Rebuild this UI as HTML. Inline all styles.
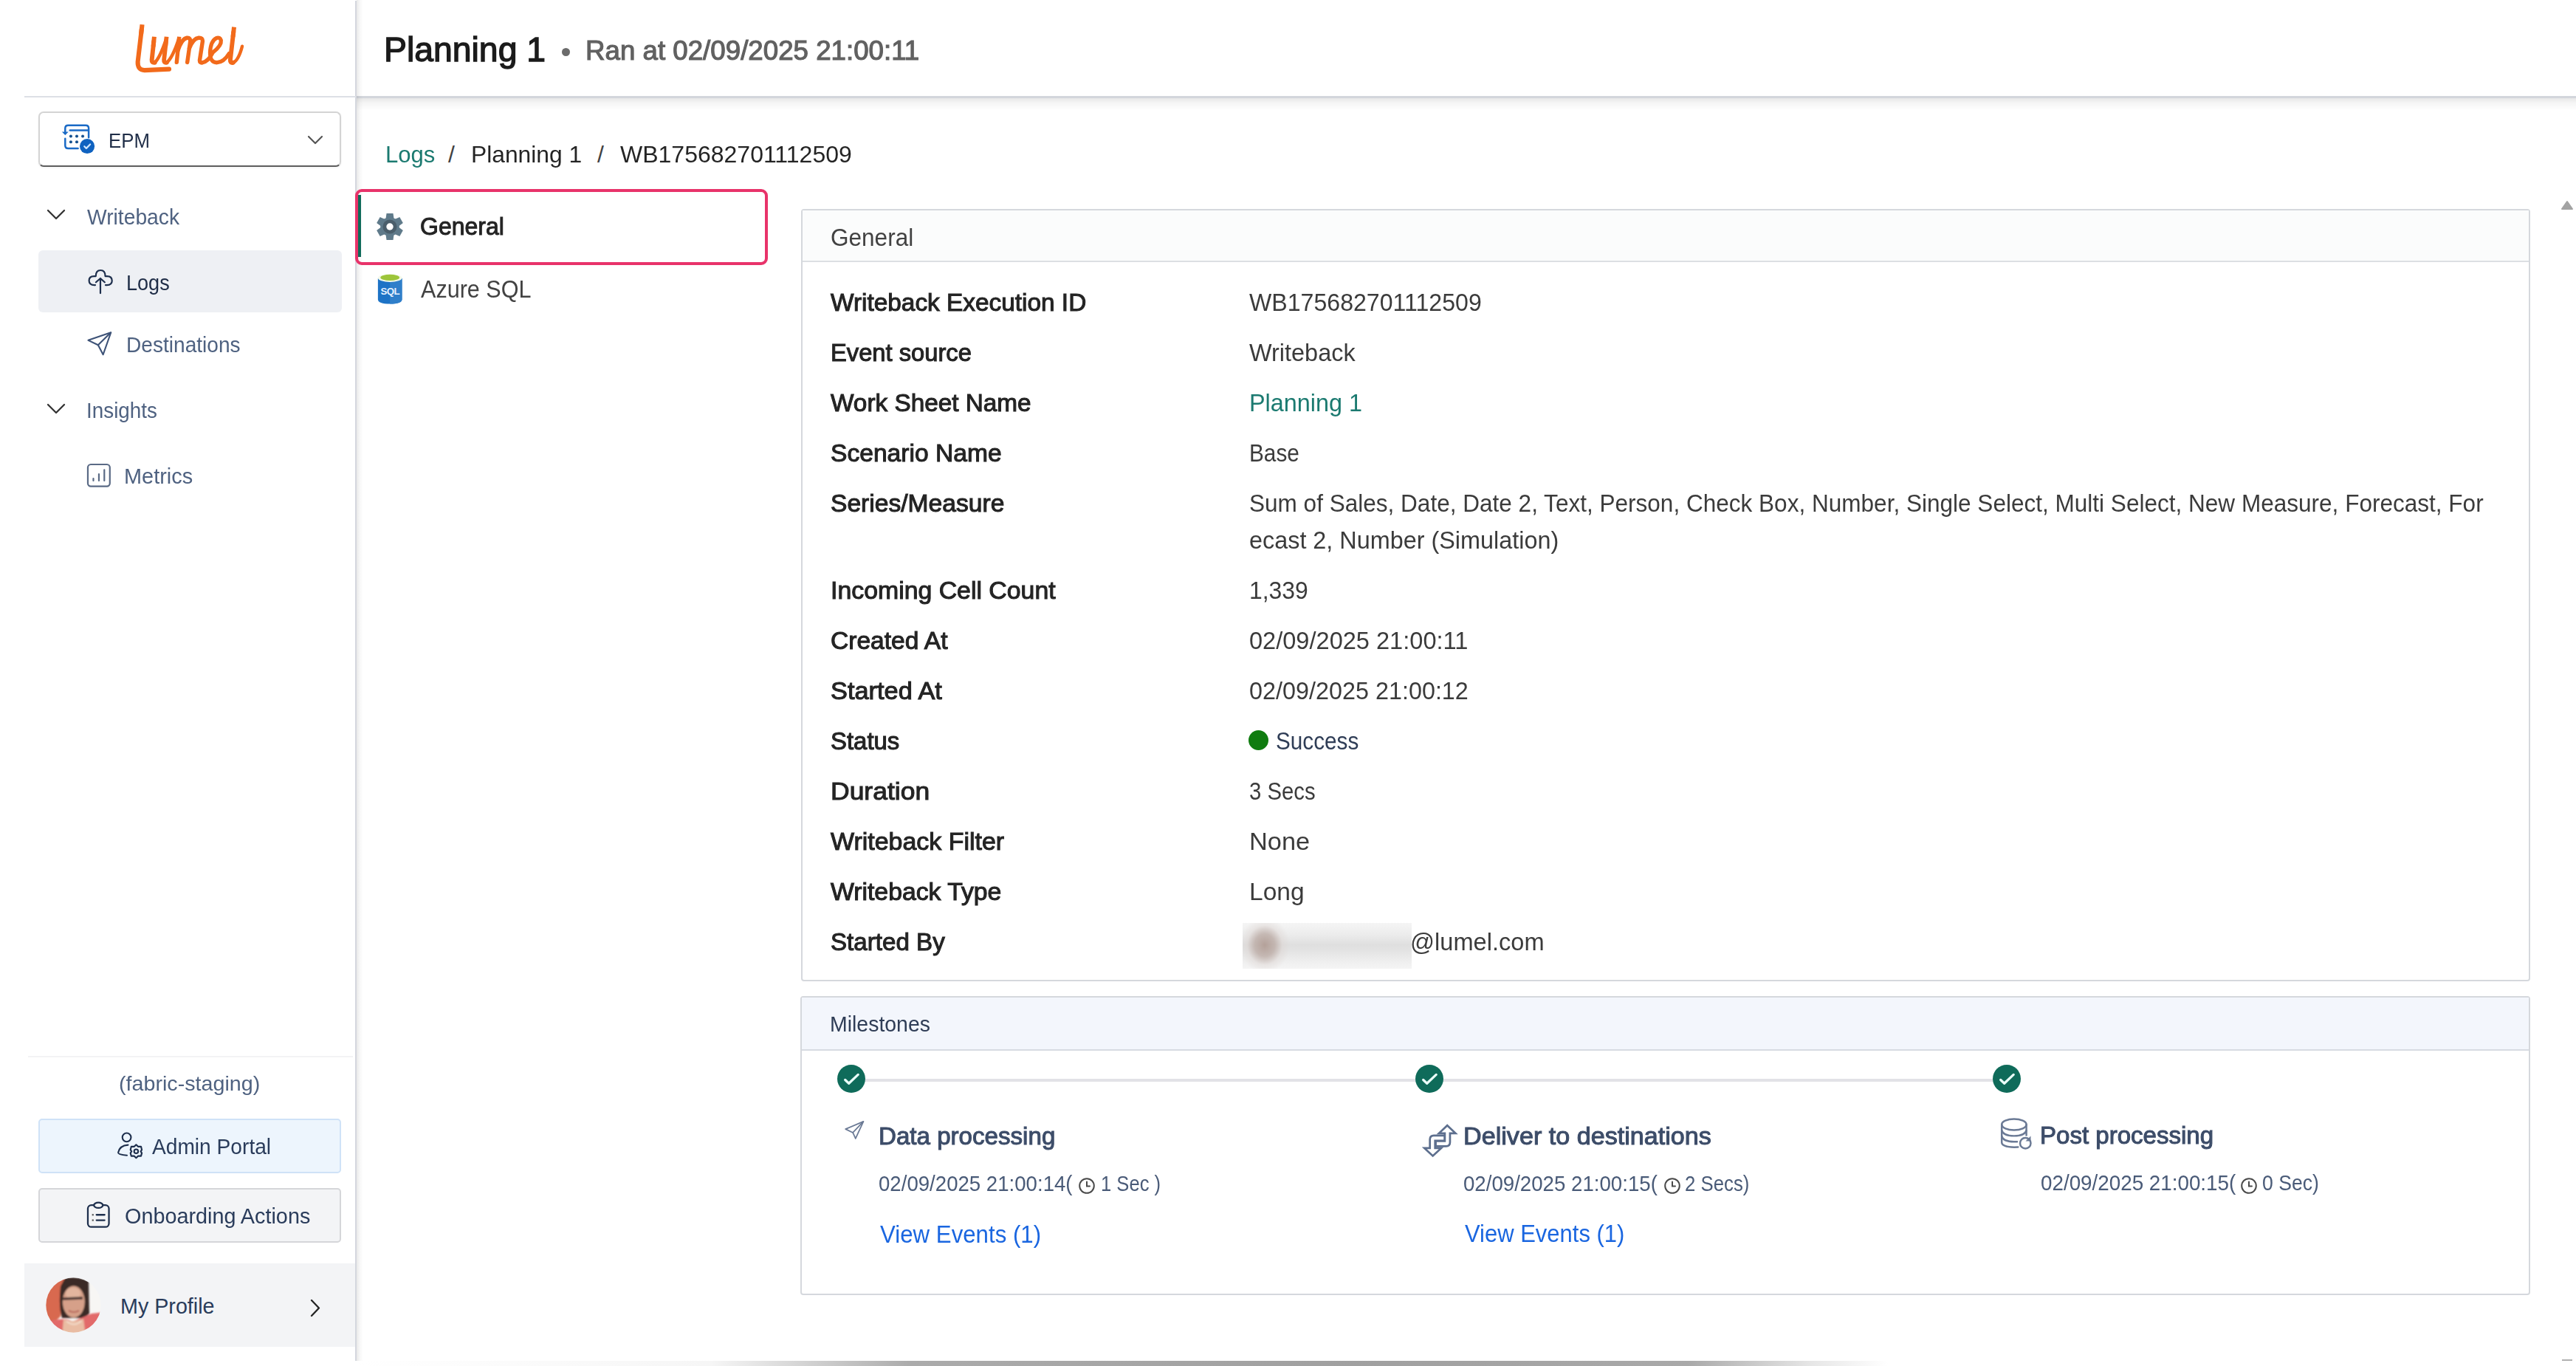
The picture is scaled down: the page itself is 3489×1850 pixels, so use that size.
<!DOCTYPE html>
<html><head><meta charset="utf-8">
<style>
html,body{margin:0;padding:0;width:3489px;height:1850px;overflow:hidden;background:#fff;}
body{position:relative;font-family:"Liberation Sans",sans-serif;}
.t{position:absolute;white-space:nowrap;line-height:1;font-family:"Liberation Sans",sans-serif;}
.a{position:absolute;}
svg{position:absolute;overflow:visible;}
</style></head><body>
<!-- main header shadow + border -->
<div class="a" style="left:483px;top:132px;width:3006px;height:18px;background:linear-gradient(180deg,rgba(0,0,0,0.10),rgba(0,0,0,0.04) 40%,rgba(0,0,0,0));"></div>
<div class="a" style="left:483px;top:130px;width:3006px;height:3px;background:#d3d6dc;"></div>
<div class="a" style="left:761px;top:65px;width:11px;height:11px;border-radius:50%;background:#6b6b6b;"></div>
<!-- sidebar -->
<div class="a" style="left:33px;top:0;width:449px;height:1843px;background:#fff;"></div>
<div class="a" style="left:483px;top:0;width:9px;height:1843px;background:linear-gradient(90deg,rgba(0,0,0,0.09),rgba(0,0,0,0.03) 45%,rgba(0,0,0,0));"></div>
<div class="a" style="left:481px;top:1px;width:2px;height:1842px;background:#d4d7de;"></div>
<div class="a" style="left:33px;top:130px;width:449px;height:2px;background:#dde0e6;"></div>

<!-- Lumel logo -->
<svg style="left:170px;top:25px;width:170px;height:80px" viewBox="0 0 2576 1212">
 <g fill="none" stroke="#f26a1b" stroke-linecap="butt">
  <path d="M342,125 L318,326" stroke-width="92"/>
  <path d="M590,375 L569,577" stroke-width="90"/>
  <path d="M842,375 L820,577" stroke-width="88"/>
  <path d="M1102,375 L1082,577" stroke-width="82"/>
  <path d="M2228,177 L2205,379" stroke-width="90"/>
 </g>
 <g fill="none" stroke="#f26a1b" stroke-linecap="round" stroke-linejoin="round">
  <path d="M330,228 L252,890 Q245,1060 390,1062 L895,1040" stroke-width="92"/>
  <path d="M580,478 L540,850 Q535,915 600,905" stroke-width="90"/>
  <path d="M600,905 Q700,820 835,425" stroke-width="68"/>
  <path d="M831,478 L790,850 Q785,920 845,905" stroke-width="88"/>
  <path d="M845,905 Q960,820 1092,425" stroke-width="68"/>
  <path d="M1092,478 L1050,900" stroke-width="82"/>
  <path d="M1075,660 Q1150,420 1260,398 Q1340,392 1328,480 L1268,900" stroke-width="82"/>
  <path d="M1310,610 Q1390,410 1500,398 Q1590,392 1582,470 L1522,860 Q1520,920 1580,905" stroke-width="82"/>
  <path d="M1580,905 Q1700,880 1790,700 Q1975,560 1960,450 Q1935,375 1865,402 Q1745,460 1735,700 Q1735,910 1880,905 Q2020,890 2125,720" stroke-width="80"/>
  <path d="M2216,280 L2150,850 Q2145,920 2210,905" stroke-width="90"/>
  <path d="M2210,905 Q2320,860 2395,570" stroke-width="66"/>
 </g>
</svg>

<!-- EPM dropdown -->
<div class="a" style="left:52px;top:151px;width:410px;height:75px;border:2px solid #d4d4d4;border-bottom:2.5px solid #5e5e5e;border-radius:7px;box-sizing:border-box;background:#fff;box-shadow:0 1px 3px rgba(0,0,0,0.06);"></div>
<svg style="left:75px;top:160px;width:60px;height:55px" viewBox="0 0 1490 1366">
 <g fill="none" stroke="#1a6ac6" stroke-width="62" stroke-linecap="round">
  <path d="M330,690 L330,920 Q330,1020 430,1020 L760,1020"/>
  <path d="M1120,650 L1120,340 Q1120,240 1020,240 L430,240 Q330,240 330,340 L330,520"/>
  <path d="M490,410 L1090,410"/>
 </g>
 <path d="M220,460 L330,570 L440,460 Z" fill="#1a6ac6"/>
 <g fill="#14508f"><circle cx="520" cy="610" r="50"/><circle cx="720" cy="610" r="50"/><circle cx="920" cy="610" r="50"/><circle cx="520" cy="800" r="50"/><circle cx="720" cy="800" r="50"/></g>
 <circle cx="1070" cy="945" r="250" fill="#0f62c0"/>
 <path d="M975,950 L1040,1015 L1170,880" fill="none" stroke="#cfe6ff" stroke-width="55" stroke-linecap="round" stroke-linejoin="round"/>
</svg>
<svg style="left:410px;top:178px;width:34px;height:24px" viewBox="0 0 34 24"><path d="M8,7 L17,16 L26,7" fill="none" stroke="#555" stroke-width="2.2" stroke-linecap="round" stroke-linejoin="round"/></svg>

<!-- Writeback / Insights chevrons -->
<svg style="left:60px;top:278px;width:32px;height:24px" viewBox="0 0 32 24"><path d="M5,7 L16,18 L27,7" fill="none" stroke="#333" stroke-width="2.3" stroke-linecap="round" stroke-linejoin="round"/></svg>
<svg style="left:60px;top:541px;width:32px;height:24px" viewBox="0 0 32 24"><path d="M5,7 L16,18 L27,7" fill="none" stroke="#333" stroke-width="2.3" stroke-linecap="round" stroke-linejoin="round"/></svg>

<!-- Logs selected bg -->
<div class="a" style="left:52px;top:339px;width:411px;height:84px;background:#eef0f4;border-radius:6px;"></div>
<svg style="left:110px;top:355px;width:55px;height:50px" viewBox="0 0 1503 1366">
 <g fill="none" stroke="#1e2f4d" stroke-width="60" stroke-linecap="round" stroke-linejoin="round">
  <path d="M520,850 L490,850 Q290,850 290,680 Q290,520 470,520 L540,520 Q540,300 715,300 Q890,300 890,520 L960,520 Q1140,520 1140,690 Q1140,850 950,850 L900,850"/>
  <path d="M710,1150 L710,620"/>
  <path d="M545,745 L710,600 L870,745"/>
 </g>
</svg>
<svg style="left:110px;top:440px;width:55px;height:50px" viewBox="0 0 1503 1366">
 <g fill="none" stroke="#3d5277" stroke-width="58" stroke-linecap="round" stroke-linejoin="round">
  <path d="M1100,280 L260,570 L625,745 L810,1100 Z"/>
  <path d="M625,745 L1085,295"/>
 </g>
</svg>
<svg style="left:110px;top:618px;width:55px;height:50px" viewBox="0 0 1503 1366">
 <g fill="none" stroke="#5a6a85" stroke-width="60" stroke-linecap="round" stroke-linejoin="round">
  <rect x="245" y="300" width="815" height="810" rx="110"/>
  <path d="M450,820 L450,900 M655,660 L655,900 M855,500 L855,900"/>
 </g>
</svg>

<!-- bottom sidebar -->
<div class="a" style="left:38px;top:1430px;width:440px;height:2px;background:#f3f3f5;"></div>
<div class="a" style="left:52px;top:1515px;width:410px;height:74px;background:#edf5fd;border:2px solid #cfe2f7;border-radius:5px;box-sizing:border-box;"></div>
<div class="a" style="left:52px;top:1609px;width:410px;height:74px;background:#f3f4f6;border:2px solid #d5d6d9;border-radius:5px;box-sizing:border-box;"></div>
<svg style="left:150px;top:1525px;width:50px;height:50px" viewBox="0 0 1366 1366">
 <g fill="none" stroke="#1e2f4d" stroke-width="58" stroke-linecap="round" stroke-linejoin="round">
  <circle cx="590" cy="420" r="160"/>
  <path d="M640,700 Q330,720 275,980 Q270,1060 600,1085"/>
  <path d="M940,690 L1010,760 L1120,760 L1150,880 L1110,940 L1150,1000 L1120,1110 L1010,1110 L940,1180 L870,1110 L760,1110 L730,1000 L770,940 L730,880 L760,760 L870,760 Z"/>
  <circle cx="940" cy="935" r="75"/>
 </g>
</svg>
<svg style="left:108px;top:1620px;width:50px;height:50px" viewBox="0 0 1366 1366">
 <g fill="none" stroke="#1e2f4d" stroke-width="62" stroke-linecap="round" stroke-linejoin="round">
  <rect x="300" y="330" width="780" height="810" rx="130"/>
  <ellipse cx="690" cy="335" rx="165" ry="100" fill="#f3f4f6"/>
  <path d="M620,690 L920,690 M620,890 L920,890"/>
 </g>
 <rect x="455" y="660" width="60" height="60" fill="#555"/><rect x="455" y="860" width="60" height="60" fill="#555"/>
</svg>

<div class="a" style="left:33px;top:1711px;width:448px;height:113px;background:#f3f4f6;"></div>
<svg style="left:61.5px;top:1730px;width:75px;height:75px" viewBox="0 0 75 75">
 <defs><clipPath id="av"><circle cx="37.5" cy="37.5" r="37.2"/></clipPath><filter id="avb" x="-20%" y="-20%" width="140%" height="140%"><feGaussianBlur stdDeviation="1.3"/></filter></defs>
 <g clip-path="url(#av)">
  <rect width="75" height="75" fill="#f7f6f4"/>
  <g filter="url(#avb)">
  <path d="M-5,-5 L28,-5 L26,1 L20,53 L10,62 L-5,62 Z" fill="#d8694f"/>
  <path d="M26,1 Q42,-2 58,5 L59,49 L52,55 L22,55 Q17,40 20,12 Z" fill="#3b2b26"/>
  <ellipse cx="37.8" cy="33" rx="15" ry="21.5" fill="#d6a089"/>
  <ellipse cx="37" cy="22" rx="10" ry="8" fill="#e2b59e"/>
  <path d="M23,29 L50,28" stroke="#4a3530" stroke-width="3.6"/>
  <path d="M31,45 Q38,49 45,45" stroke="#b9695d" stroke-width="2.2" fill="none"/>
  <path d="M-5,75 L-5,62 L10,58 Q28,54 36,60 Q50,54 62,49 L80,47 L80,80 Z" fill="#e26b6b"/>
  <path d="M24,57 Q37,62 51,56 L54,80 L22,80 Z" fill="#e9bca3"/>
  <path d="M28,59 Q38,68 48,59" stroke="#f3dccb" stroke-width="2" fill="none"/>
  </g>
 </g>
</svg>
<svg style="left:412px;top:1758px;width:30px;height:28px" viewBox="0 0 30 28"><path d="M10,3 L20,13.5 L10,24" fill="none" stroke="#242424" stroke-width="2.3" stroke-linecap="round" stroke-linejoin="round"/></svg>

<!-- General tab (selected) -->
<div class="a" style="left:481px;top:256px;width:559px;height:103px;border:4px solid #e8336a;border-radius:9px;box-sizing:border-box;"></div>
<div class="a" style="left:485px;top:264px;width:4px;height:84px;background:#0f6b5b;"></div>
<svg style="left:510px;top:289px;width:36px;height:36px" viewBox="-18 -18 36 36">
 <g fill="#5f7a8a"><path d="M-5.6,-10 L5.6,-10 L4.5,-18 L-4.5,-18 Z" transform="rotate(0)"/><path d="M-5.6,-10 L5.6,-10 L4.5,-18 L-4.5,-18 Z" transform="rotate(60)"/><path d="M-5.6,-10 L5.6,-10 L4.5,-18 L-4.5,-18 Z" transform="rotate(120)"/><path d="M-5.6,-10 L5.6,-10 L4.5,-18 L-4.5,-18 Z" transform="rotate(180)"/><path d="M-5.6,-10 L5.6,-10 L4.5,-18 L-4.5,-18 Z" transform="rotate(240)"/><path d="M-5.6,-10 L5.6,-10 L4.5,-18 L-4.5,-18 Z" transform="rotate(300)"/>
  <circle r="12.8"/>
 </g>
 <circle r="9.6" fill="#4a5e6b"/>
 <circle r="4.7" fill="#fff"/>
</svg>
<svg style="left:500px;top:362px;width:60px;height:55px" viewBox="0 0 1490 1366">
 <path d="M295,370 L295,1080 Q300,1230 700,1230 Q1100,1230 1105,1080 L1105,370 Z" fill="#1d73c6"/>
 <path d="M700,370 L1105,370 L1105,1080 Q1100,1225 700,1230 Z" fill="#2f7fca"/>
 <ellipse cx="700" cy="360" rx="405" ry="135" fill="#f3f9e8"/>
 <ellipse cx="700" cy="345" rx="320" ry="100" fill="#9dc53a"/>
 <text x="700" y="915" text-anchor="middle" font-family="Liberation Sans" font-weight="bold" font-size="330" fill="#e6f2ff" letter-spacing="-15">SQL</text>
</svg>

<!-- scroll arrow -->
<svg style="left:3468px;top:270px;width:18px;height:14px" viewBox="0 0 18 14"><path d="M2,13 L9,3 L16,13 Z" fill="#a3a3a3" stroke="#a3a3a3" stroke-width="2" stroke-linejoin="round"/></svg>

<!-- General card -->
<div class="a" style="left:1085px;top:283px;width:2342px;height:1046px;border:2px solid #d5d8dd;border-radius:4px;box-sizing:border-box;background:#fff;"></div>
<div class="a" style="left:1087px;top:285px;width:2338px;height:68px;background:#fbfcfc;"></div>
<div class="a" style="left:1087px;top:353px;width:2338px;height:2px;background:#dcdfe3;"></div>

<!-- status dot -->
<div class="a" style="left:1691px;top:989px;width:27px;height:27px;border-radius:50%;background:#107c10;"></div>
<!-- blurred name -->
<div class="a" style="left:1683px;top:1250px;width:229px;height:62px;background:linear-gradient(180deg,#f5f5f5 0%,#ececec 25%,#dfdfdf 48%,#e3e3e3 60%,#efefef 85%,#f5f5f5 100%);"></div>
<div class="a" style="left:1683px;top:1250px;width:90px;height:62px;background:radial-gradient(ellipse 34px 38px at 30px 30px,rgba(178,158,150,0.95) 0%,rgba(188,172,166,0.8) 40%,rgba(220,212,209,0.45) 70%,rgba(240,240,240,0) 100%);"></div>

<!-- Milestones card -->
<div class="a" style="left:1084px;top:1349px;width:2343px;height:405px;border:2px solid #d5d8dd;border-radius:4px;box-sizing:border-box;background:#fff;"></div>
<div class="a" style="left:1086px;top:1351px;width:2339px;height:70px;background:#f3f6fc;"></div>
<div class="a" style="left:1086px;top:1421px;width:2339px;height:2px;background:#d7dbe2;"></div>
<!-- connector -->
<div class="a" style="left:1172px;top:1461px;width:1527px;height:4px;background:#e2e2e7;"></div>
<svg style="left:1133px;top:1441px;width:40px;height:40px" viewBox="-20 -20 40 40"><circle r="19" fill="#0f6b5a"/><path d="M-8.3,1.5 L-3.3,6.2 L9.2,-5.6" fill="none" stroke="#eafff9" stroke-width="3.3" stroke-linecap="round" stroke-linejoin="round"/></svg>
<svg style="left:1916px;top:1441px;width:40px;height:40px" viewBox="-20 -20 40 40"><circle r="19" fill="#0f6b5a"/><path d="M-8.3,1.5 L-3.3,6.2 L9.2,-5.6" fill="none" stroke="#eafff9" stroke-width="3.3" stroke-linecap="round" stroke-linejoin="round"/></svg>
<svg style="left:2698px;top:1441px;width:40px;height:40px" viewBox="-20 -20 40 40"><circle r="19" fill="#0f6b5a"/><path d="M-8.3,1.5 L-3.3,6.2 L9.2,-5.6" fill="none" stroke="#eafff9" stroke-width="3.3" stroke-linecap="round" stroke-linejoin="round"/></svg>

<!-- milestone icons -->
<svg style="left:1135px;top:1505px;width:50px;height:50px" viewBox="0 0 1366 1366">
 <g fill="none" stroke="#6b7a95" stroke-width="48" stroke-linecap="round" stroke-linejoin="round">
  <path d="M940,380 L280,660 L550,790 L650,1010 Z"/><path d="M550,790 L925,395"/>
 </g>
</svg>
<svg style="left:1920px;top:1515px;width:60px;height:60px" viewBox="0 0 1366 1366">
 <g fill="#fff" stroke="#5d6f8e" stroke-width="62" stroke-linejoin="miter">
  <path d="M840,520 L500,520 Q380,520 380,640 L380,910 L210,910 L470,1150 L730,910 L540,910 L540,680 L840,680 Z"/>
  <path d="M560,690 L840,690 L840,450 L660,450 L915,210 L1170,450 L1000,450 L1000,730 Q1000,850 880,850 L560,850 Z"/>
 </g>
</svg>
<svg style="left:2700px;top:1505px;width:60px;height:60px" viewBox="0 0 1366 1366">
 <g fill="none" stroke="#6b7a95" stroke-width="56" stroke-linecap="round" stroke-linejoin="round">
  <ellipse cx="635" cy="410" rx="380" ry="170"/>
  <path d="M255,410 L255,960 Q260,1100 640,1110 L760,1105"/>
  <path d="M1015,410 L1015,740"/>
  <path d="M255,590 Q300,760 635,760 Q970,760 1015,590"/>
  <path d="M255,770 Q300,935 635,940 L730,940"/>
  <circle cx="985" cy="985" r="165"/>
 </g>
 <path d="M1150,760 L1150,920 L990,920 Z" fill="#6b7a95"/>
</svg>
<!-- clocks -->
<svg style="left:1460px;top:1594px;width:24px;height:24px" viewBox="0 0 24 24"><circle cx="12" cy="12" r="9.8" fill="none" stroke="#4a4a4a" stroke-width="2.0"/><path d="M12,6.5 L12,12.5 L16,12.5" fill="none" stroke="#4a4a4a" stroke-width="2.0" stroke-linecap="round"/></svg>
<svg style="left:2253px;top:1594px;width:24px;height:24px" viewBox="0 0 24 24"><circle cx="12" cy="12" r="9.8" fill="none" stroke="#4a4a4a" stroke-width="2.0"/><path d="M12,6.5 L12,12.5 L16,12.5" fill="none" stroke="#4a4a4a" stroke-width="2.0" stroke-linecap="round"/></svg>
<svg style="left:3034px;top:1594px;width:24px;height:24px" viewBox="0 0 24 24"><circle cx="12" cy="12" r="9.8" fill="none" stroke="#4a4a4a" stroke-width="2.0"/><path d="M12,6.5 L12,12.5 L16,12.5" fill="none" stroke="#4a4a4a" stroke-width="2.0" stroke-linecap="round"/></svg>

<!-- bottom scrollbar -->
<div class="a" style="left:483px;top:1843px;width:3006px;height:7px;background:linear-gradient(90deg,rgba(255,255,255,0) 0%,#f6f6f6 16%,#ababab 25%,#a0a0a0 45%,#a9a9a9 60%,#e6e6e6 65.5%,rgba(255,255,255,0) 69%);"></div>
<div class="a" style="left:3470px;top:1841px;width:14px;height:2px;background:#b0b0b0;"></div>

<div id="epm" class="t" style="left:147.00px;top:176.62px;font-size:27.50px;font-weight:400;color:#1f2d47;letter-spacing:0.000px;transform:scaleX(0.9383);transform-origin:0 0;">EPM</div>
<div id="wb" class="t" style="left:118.00px;top:278.50px;font-size:30.00px;font-weight:400;color:#4f6281;letter-spacing:0.000px;transform:scaleX(0.9415);transform-origin:0 0;">Writeback</div>
<div id="logs" class="t" style="left:171.00px;top:367.93px;font-size:29.50px;font-weight:400;color:#1f2d47;letter-spacing:0.000px;transform:scaleX(0.9180);transform-origin:0 0;">Logs</div>
<div id="dest" class="t" style="left:171.00px;top:452.12px;font-size:29.50px;font-weight:400;color:#4f6281;letter-spacing:0.000px;transform:scaleX(0.9526);transform-origin:0 0;">Destinations</div>
<div id="ins" class="t" style="left:117.40px;top:540.50px;font-size:30.00px;font-weight:400;color:#4f6281;letter-spacing:0.000px;transform:scaleX(0.9277);transform-origin:0 0;">Insights</div>
<div id="met" class="t" style="left:168.00px;top:630.22px;font-size:29.50px;font-weight:400;color:#4f6281;letter-spacing:0.000px;transform:scaleX(0.9796);transform-origin:0 0;">Metrics</div>
<div id="fab" class="t" style="left:161.20px;top:1453.18px;font-size:28.50px;font-weight:400;color:#4f6281;letter-spacing:0.000px;transform:scaleX(1.0059);transform-origin:0 0;">(fabric-staging)</div>
<div id="adm" class="t" style="left:206.00px;top:1539.40px;font-size:28.70px;font-weight:400;color:#2a3c5b;letter-spacing:0.000px;transform:scaleX(0.9810);transform-origin:0 0;">Admin Portal</div>
<div id="onb" class="t" style="left:169.00px;top:1633.31px;font-size:28.70px;font-weight:400;color:#2a3c5b;letter-spacing:0.000px;transform:scaleX(1.0036);transform-origin:0 0;">Onboarding Actions</div>
<div id="prof" class="t" style="left:163.00px;top:1755.20px;font-size:28.70px;font-weight:400;color:#2a3c5b;letter-spacing:0.000px;transform:scaleX(1.0000);transform-origin:0 0;">My Profile</div>
<div id="title" class="t" style="left:520.00px;top:45.33px;font-size:45.50px;font-weight:400;color:#1b1b1b;letter-spacing:0.000px;transform:scaleX(1.0188);transform-origin:0 0;-webkit-text-stroke:1.36px #1b1b1b;">Planning 1</div>
<div id="ranat" class="t" style="left:793.00px;top:49.53px;font-size:37.50px;font-weight:400;color:#616161;letter-spacing:0.000px;transform:scaleX(0.9785);transform-origin:0 0;-webkit-text-stroke:1.20px #616161;">Ran at 02/09/2025 21:00:11</div>
<div id="bc1" class="t" style="left:522.00px;top:192.80px;font-size:32.00px;font-weight:400;color:#1b7a70;letter-spacing:0.000px;transform:scaleX(0.9704);transform-origin:0 0;">Logs</div>
<div id="bcs1" class="t" style="left:607.00px;top:192.80px;font-size:32.00px;font-weight:400;color:#424242;letter-spacing:0.000px;transform:scaleX(1.0000);transform-origin:0 0;">/</div>
<div id="bc2" class="t" style="left:638.00px;top:192.80px;font-size:32.00px;font-weight:400;color:#242424;letter-spacing:0.000px;transform:scaleX(0.9932);transform-origin:0 0;">Planning 1</div>
<div id="bcs2" class="t" style="left:809.00px;top:192.80px;font-size:32.00px;font-weight:400;color:#424242;letter-spacing:0.000px;transform:scaleX(1.0000);transform-origin:0 0;">/</div>
<div id="bc3" class="t" style="left:840.00px;top:192.80px;font-size:32.00px;font-weight:400;color:#242424;letter-spacing:0.000px;transform:scaleX(1.0001);transform-origin:0 0;">WB175682701112509</div>
<div id="tabg" class="t" style="left:568.80px;top:290.14px;font-size:33.60px;font-weight:400;color:#242424;letter-spacing:0.000px;transform:scaleX(0.9526);transform-origin:0 0;-webkit-text-stroke:1.01px #242424;">General</div>
<div id="taba" class="t" style="left:569.80px;top:374.94px;font-size:33.60px;font-weight:400;color:#424242;letter-spacing:0.000px;transform:scaleX(0.9105);transform-origin:0 0;">Azure SQL</div>
<div id="cgen" class="t" style="left:1124.60px;top:303.50px;font-size:34.00px;font-weight:400;color:#424242;letter-spacing:0.000px;transform:scaleX(0.9275);transform-origin:0 0;">General</div>
<div id="lbl0" class="t" style="left:1124.50px;top:391.90px;font-size:34.00px;font-weight:400;color:#242424;letter-spacing:0.000px;transform:scaleX(0.9816);transform-origin:0 0;-webkit-text-stroke:1.09px #242424;">Writeback Execution ID</div>
<div id="lbl1" class="t" style="left:1124.50px;top:459.95px;font-size:34.00px;font-weight:400;color:#242424;letter-spacing:0.000px;transform:scaleX(0.9618);transform-origin:0 0;-webkit-text-stroke:1.09px #242424;">Event source</div>
<div id="lbl2" class="t" style="left:1124.50px;top:528.00px;font-size:34.00px;font-weight:400;color:#242424;letter-spacing:0.000px;transform:scaleX(0.9802);transform-origin:0 0;-webkit-text-stroke:1.09px #242424;">Work Sheet Name</div>
<div id="lbl3" class="t" style="left:1124.50px;top:596.05px;font-size:34.00px;font-weight:400;color:#242424;letter-spacing:0.000px;transform:scaleX(0.9887);transform-origin:0 0;-webkit-text-stroke:1.09px #242424;">Scenario Name</div>
<div id="lbl4" class="t" style="left:1124.50px;top:664.10px;font-size:34.00px;font-weight:400;color:#242424;letter-spacing:0.000px;transform:scaleX(0.9887);transform-origin:0 0;-webkit-text-stroke:1.09px #242424;">Series/Measure</div>
<div id="lbl5" class="t" style="left:1124.50px;top:781.90px;font-size:34.00px;font-weight:400;color:#242424;letter-spacing:0.000px;transform:scaleX(0.9951);transform-origin:0 0;-webkit-text-stroke:1.09px #242424;">Incoming Cell Count</div>
<div id="lbl6" class="t" style="left:1124.50px;top:849.95px;font-size:34.00px;font-weight:400;color:#242424;letter-spacing:0.000px;transform:scaleX(0.9871);transform-origin:0 0;-webkit-text-stroke:1.09px #242424;">Created At</div>
<div id="lbl7" class="t" style="left:1124.50px;top:918.00px;font-size:34.00px;font-weight:400;color:#242424;letter-spacing:0.000px;transform:scaleX(1.0102);transform-origin:0 0;-webkit-text-stroke:1.09px #242424;">Started At</div>
<div id="lbl8" class="t" style="left:1124.50px;top:986.05px;font-size:34.00px;font-weight:400;color:#242424;letter-spacing:0.000px;transform:scaleX(0.9683);transform-origin:0 0;-webkit-text-stroke:1.09px #242424;">Status</div>
<div id="lbl9" class="t" style="left:1124.50px;top:1054.10px;font-size:34.00px;font-weight:400;color:#242424;letter-spacing:0.000px;transform:scaleX(1.0439);transform-origin:0 0;-webkit-text-stroke:1.09px #242424;">Duration</div>
<div id="lbl10" class="t" style="left:1124.50px;top:1122.15px;font-size:34.00px;font-weight:400;color:#242424;letter-spacing:0.000px;transform:scaleX(0.9984);transform-origin:0 0;-webkit-text-stroke:1.09px #242424;">Writeback Filter</div>
<div id="lbl11" class="t" style="left:1124.50px;top:1190.20px;font-size:34.00px;font-weight:400;color:#242424;letter-spacing:0.000px;transform:scaleX(0.9927);transform-origin:0 0;-webkit-text-stroke:1.09px #242424;">Writeback Type</div>
<div id="lbl12" class="t" style="left:1124.50px;top:1258.25px;font-size:34.00px;font-weight:400;color:#242424;letter-spacing:0.000px;transform:scaleX(0.9749);transform-origin:0 0;-webkit-text-stroke:1.09px #242424;">Started By</div>
<div id="v0" class="t" style="left:1692.00px;top:391.90px;font-size:34.00px;font-weight:400;color:#3b3b3b;letter-spacing:0.000px;transform:scaleX(0.9443);transform-origin:0 0;">WB175682701112509</div>
<div id="v1" class="t" style="left:1692.00px;top:459.95px;font-size:34.00px;font-weight:400;color:#3b3b3b;letter-spacing:0.000px;transform:scaleX(0.9544);transform-origin:0 0;">Writeback</div>
<div id="v2" class="t" style="left:1692.00px;top:528.00px;font-size:34.00px;font-weight:400;color:#1b7a70;letter-spacing:0.000px;transform:scaleX(0.9526);transform-origin:0 0;">Planning 1</div>
<div id="v3" class="t" style="left:1692.00px;top:596.05px;font-size:34.00px;font-weight:400;color:#3b3b3b;letter-spacing:0.000px;transform:scaleX(0.8760);transform-origin:0 0;">Base</div>
<div id="v4a" class="t" style="left:1692.00px;top:664.10px;font-size:34.00px;font-weight:400;color:#3b3b3b;letter-spacing:0.000px;transform:scaleX(0.9276);transform-origin:0 0;">Sum of Sales, Date, Date 2, Text, Person, Check Box, Number, Single Select, Multi Select, New Measure, Forecast, For</div>
<div id="v4b" class="t" style="left:1692.00px;top:713.80px;font-size:34.00px;font-weight:400;color:#3b3b3b;letter-spacing:0.000px;transform:scaleX(0.9521);transform-origin:0 0;">ecast 2, Number (Simulation)</div>
<div id="v5" class="t" style="left:1692.00px;top:781.90px;font-size:34.00px;font-weight:400;color:#3b3b3b;letter-spacing:0.000px;transform:scaleX(0.9380);transform-origin:0 0;">1,339</div>
<div id="v6" class="t" style="left:1692.00px;top:849.95px;font-size:34.00px;font-weight:400;color:#3b3b3b;letter-spacing:0.000px;transform:scaleX(0.9577);transform-origin:0 0;">02/09/2025 21:00:11</div>
<div id="v7" class="t" style="left:1692.00px;top:918.00px;font-size:34.00px;font-weight:400;color:#3b3b3b;letter-spacing:0.000px;transform:scaleX(0.9516);transform-origin:0 0;">02/09/2025 21:00:12</div>
<div id="v8" class="t" style="left:1728.00px;top:986.05px;font-size:34.00px;font-weight:400;color:#2f3d56;letter-spacing:0.000px;transform:scaleX(0.8741);transform-origin:0 0;">Success</div>
<div id="v9" class="t" style="left:1692.00px;top:1054.10px;font-size:34.00px;font-weight:400;color:#3b3b3b;letter-spacing:0.000px;transform:scaleX(0.8627);transform-origin:0 0;">3 Secs</div>
<div id="v10" class="t" style="left:1692.00px;top:1122.15px;font-size:34.00px;font-weight:400;color:#3b3b3b;letter-spacing:0.000px;transform:scaleX(1.0108);transform-origin:0 0;">None</div>
<div id="v11" class="t" style="left:1692.00px;top:1190.20px;font-size:34.00px;font-weight:400;color:#3b3b3b;letter-spacing:0.000px;transform:scaleX(0.9863);transform-origin:0 0;">Long</div>
<div id="v12" class="t" style="left:1910.40px;top:1258.25px;font-size:34.00px;font-weight:400;color:#3b3b3b;letter-spacing:0.000px;transform:scaleX(0.9584);transform-origin:0 0;">@lumel.com</div>
<div id="mhead" class="t" style="left:1123.60px;top:1372.95px;font-size:29.00px;font-weight:400;color:#2f3d56;letter-spacing:0.000px;transform:scaleX(0.9810);transform-origin:0 0;">Milestones</div>
<div id="m1t" class="t" style="left:1190.20px;top:1521.10px;font-size:34.00px;font-weight:400;color:#3d4d69;letter-spacing:0.000px;transform:scaleX(0.9740);transform-origin:0 0;-webkit-text-stroke:1.09px #3d4d69;">Data processing</div>
<div id="m2t" class="t" style="left:1981.80px;top:1521.10px;font-size:34.00px;font-weight:400;color:#3d4d69;letter-spacing:0.000px;transform:scaleX(1.0042);transform-origin:0 0;-webkit-text-stroke:1.09px #3d4d69;">Deliver to destinations</div>
<div id="m3t" class="t" style="left:2763.40px;top:1520.10px;font-size:34.00px;font-weight:400;color:#3d4d69;letter-spacing:0.000px;transform:scaleX(0.9716);transform-origin:0 0;-webkit-text-stroke:1.09px #3d4d69;">Post processing</div>
<div id="m1a" class="t" style="left:1190.00px;top:1587.92px;font-size:29.50px;font-weight:400;color:#4a5b78;letter-spacing:0.000px;transform:scaleX(0.9360);transform-origin:0 0;">02/09/2025 21:00:14(</div>
<div id="m1b" class="t" style="left:1490.80px;top:1587.92px;font-size:29.50px;font-weight:400;color:#4a5b78;letter-spacing:0.000px;transform:scaleX(0.8681);transform-origin:0 0;">1 Sec )</div>
<div id="m2a" class="t" style="left:1982.00px;top:1587.92px;font-size:29.50px;font-weight:400;color:#4a5b78;letter-spacing:0.000px;transform:scaleX(0.9371);transform-origin:0 0;">02/09/2025 21:00:15(</div>
<div id="m2b" class="t" style="left:2282.00px;top:1587.92px;font-size:29.50px;font-weight:400;color:#4a5b78;letter-spacing:0.000px;transform:scaleX(0.8745);transform-origin:0 0;">2 Secs)</div>
<div id="m3a" class="t" style="left:2764.40px;top:1587.42px;font-size:29.50px;font-weight:400;color:#4a5b78;letter-spacing:0.000px;transform:scaleX(0.9421);transform-origin:0 0;">02/09/2025 21:00:15(</div>
<div id="m3b" class="t" style="left:3064.00px;top:1587.42px;font-size:29.50px;font-weight:400;color:#4a5b78;letter-spacing:0.000px;transform:scaleX(0.9013);transform-origin:0 0;">0 Sec)</div>
<div id="m1v" class="t" style="left:1192.20px;top:1655.35px;font-size:33.00px;font-weight:400;color:#1a66e0;letter-spacing:0.000px;transform:scaleX(0.9463);transform-origin:0 0;">View Events (1)</div>
<div id="m2v" class="t" style="left:1984.00px;top:1654.45px;font-size:33.00px;font-weight:400;color:#1a66e0;letter-spacing:0.000px;transform:scaleX(0.9389);transform-origin:0 0;">View Events (1)</div>
</body></html>
